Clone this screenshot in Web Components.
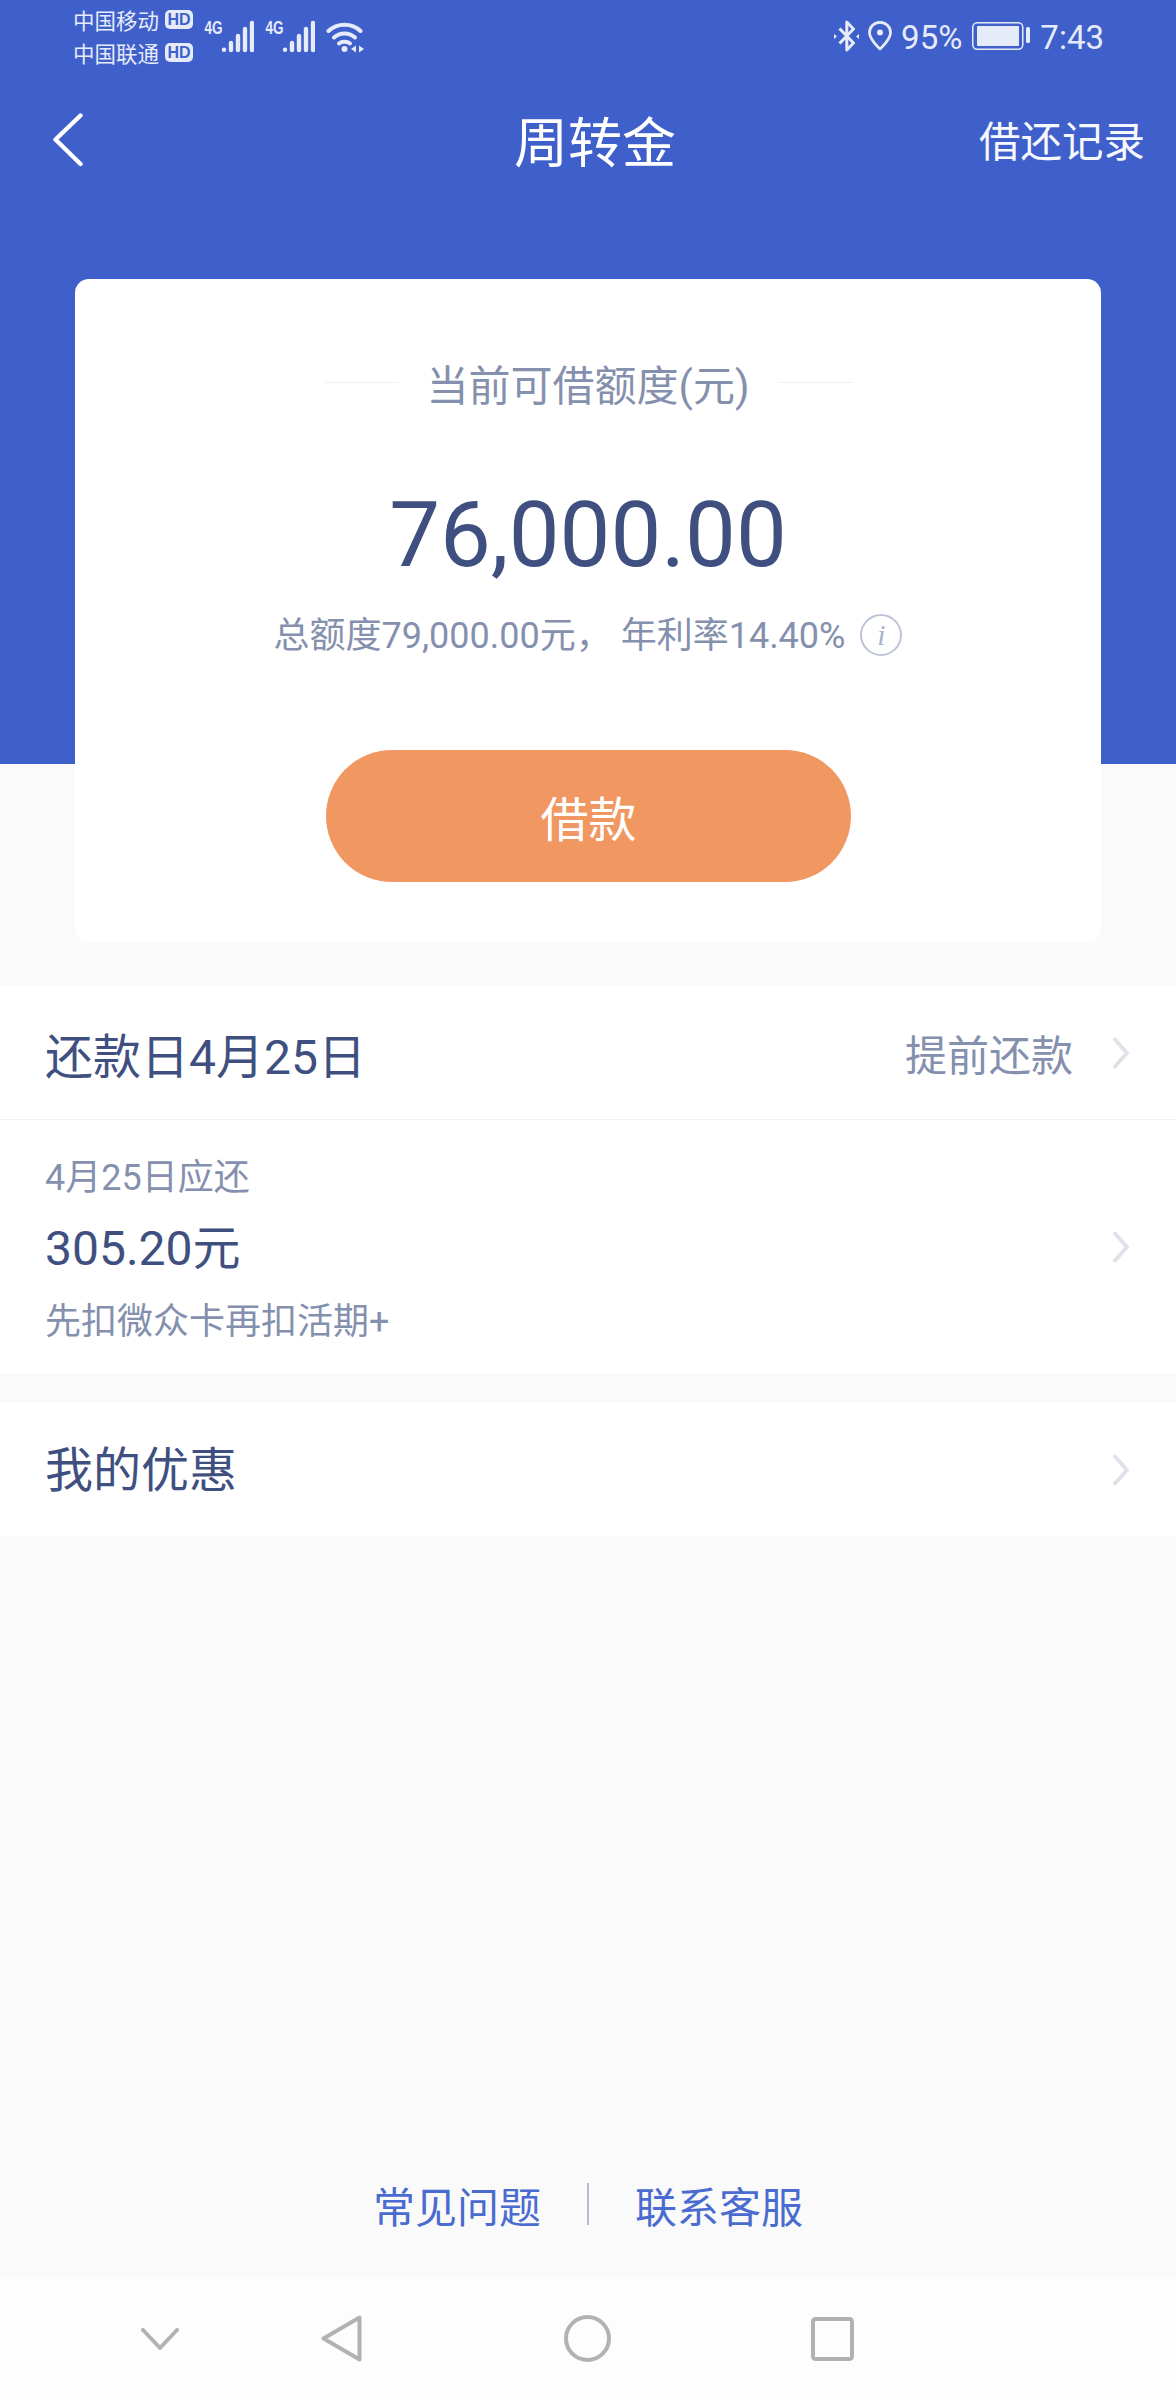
<!DOCTYPE html>
<html lang="zh-CN">
<head>
<meta charset="utf-8">
<title>周转金</title>
<style>
  html, body { margin: 0; padding: 0; }
  body { font-family: Roboto, "Noto Sans CJK SC", sans-serif; background: #fafafa; }
</style>
</head>
<body>
<loan-screen>
  <status-bar slot="top"></status-bar>
  <title-bar slot="top" heading="周转金" action="借还记录"></title-bar>
  <quota-card slot="top"></quota-card>

  <info-row slot="top" class="first">
    <span class="big">还款日4月25日</span>
    <span slot="aside">提前还款</span>
  </info-row>
  <bill-row slot="top"></bill-row>
  <info-row slot="top" class="last">
    <span>我的优惠</span>
  </info-row>

  <help-footer slot="bottom"></help-footer>
  <nav-keys slot="bottom"></nav-keys>
</loan-screen>

<script>
  // Small helper: every component gets an open shadow root from a markup string.
  const define = (name, markup, setup) => {
    customElements.define(name, class extends HTMLElement {
      constructor() {
        super();
        this.attachShadow({ mode: 'open' }).innerHTML = markup;
        if (setup) setup(this, this.shadowRoot);
      }
    });
  };

  const CHEVRON = `<svg width="18" height="32" viewBox="0 0 18 32" fill="none" stroke="#dfe2e9" stroke-width="4" stroke-linecap="round" stroke-linejoin="round"><path d="M3 2.5 L15 16 L3 29.5"/></svg>`;

  // Signal meter: network label plus a dot and four rising bars.
  const SIGNAL = `<svg width="50" height="36" viewBox="0 0 50 36" fill="#e6ebfa">
      <text x="0.5" y="15" font-family="Liberation Sans Narrow, Liberation Sans, sans-serif" font-weight="bold" font-size="18" textLength="18" lengthAdjust="spacingAndGlyphs">4G</text>
      <path d="M20 30.6 V30.8 M27 31 V24 M34 31 V17 M41 31 V10 M48 31 V4" stroke="#e6ebfa" stroke-width="4.4" stroke-linecap="round"/>
    </svg>`;

  // Page shell: blue band behind the header and the top of the card.
  define('loan-screen', `
    <style>
      :host { display: flex; flex-direction: column; justify-content: space-between;
              width: 1176px; height: 2400px; overflow: hidden;
              background: linear-gradient(#3f5fca 764px, #fafafa 764px); }
      .top, .bottom { display: flex; flex-direction: column; }
    </style>
    <div class="top"><slot name="top"></slot></div>
    <div class="bottom"><slot name="bottom"></slot></div>
  `);

  define('status-bar', `
    <style>
      :host { display: flex; align-items: flex-start; height: 72px; padding: 3px 72px 0 73px;
              box-sizing: border-box; color: #e6ebfa; }
      .carriers { display: flex; flex-direction: column; width: 120px; font-size: 21.5px; }
      .carrier { display: flex; align-items: center; justify-content: space-between; height: 33px; }
      .hd { width: 28px; height: 19px; border-radius: 5px; background: #e6ebfa; color: #3f5fca;
            font: bold 16px/19px "Liberation Sans", sans-serif; text-align: center; }
      .radios { display: flex; align-items: flex-start; margin: 16px 0 0 11px; gap: 11px; }
      .radios svg { display: block; }
      .system { display: flex; align-items: center; margin-left: auto; margin-top: 16px; height: 34px; }
      .system span { font-size: 33px; line-height: 34px; margin-top: 3px; }
      .bt { margin-right: 8px; }
      .pin { margin-right: 8px; }
      .pct { margin-right: 10px; }
      .bat { margin-right: 10px; }
    </style>
    <div class="carriers">
      <div class="carrier">中国移动<span class="hd">HD</span></div>
      <div class="carrier">中国联通<span class="hd">HD</span></div>
    </div>
    <div class="radios">
      ${SIGNAL}
      ${SIGNAL}
      <svg width="38" height="36" viewBox="0 0 38 36" fill="none" stroke="#e6ebfa" stroke-width="4" stroke-linecap="round">
        <path d="M2.5 12 C11 3.5 26 3.5 34.5 12"/>
        <path d="M8 18.5 C13.5 13 23.5 13 29 18.5"/>
        <path d="M13 24.5 C15.8 22 21.2 22 24 24.5"/>
        <circle cx="18.5" cy="30" r="3" fill="#e6ebfa" stroke="none"/>
        <path d="M30 26.5 V33.5 L25 30Z M33 26.5 V33.5 L38 30Z" fill="#e6ebfa" stroke="none"/>
      </svg>
    </div>
    <div class="system">
      <svg class="bt" width="25" height="32" viewBox="0 0 25 32" fill="none" stroke="#e6ebfa" stroke-width="3" stroke-linejoin="round">
        <path d="M5.5 8.5 L19.5 23 L12.8 30 V2 L19.5 9 L5.5 23.5"/>
        <path d="M0 14 L3 16.5 L0 19Z M25 14 L22 16.5 L25 19Z" fill="#e6ebfa" stroke="none"/>
      </svg>
      <svg class="pin" width="26" height="30" viewBox="0 0 26 30" fill="none" stroke="#e6ebfa" stroke-width="2.8">
        <path d="M13 28 C13 28 2.5 18.5 2.5 11.5 A10.5 10.2 0 0 1 23.5 11.5 C23.5 18.5 13 28 13 28Z" stroke-linejoin="round"/>
        <circle cx="13" cy="11.5" r="3" fill="#e6ebfa" stroke="none"/>
      </svg>
      <span class="pct">95%</span>
      <svg class="bat" width="58" height="28" viewBox="0 0 58 28" fill="#e6ebfa">
        <rect x="0.75" y="0.75" width="50" height="26.5" rx="4.5" fill="none" stroke="#e6ebfa" stroke-width="1.5"/>
        <rect x="5" y="4" width="42" height="20" rx="1"/>
        <rect x="54" y="5" width="4" height="16" rx="1.5"/>
      </svg>
      <span>7:43</span>
    </div>
  `);

  define('title-bar', `
    <style>
      :host { display: grid; grid-template-columns: 1fr auto 1fr; align-items: center;
              height: 136px; padding: 0 31px 0 53px; box-sizing: border-box; color: #fff; }
      svg { display: block; }
      .heading { font-size: 54px; margin-left: -8px; margin-top: -2px; }
      .action { font-size: 41.5px; justify-self: end; color: #f6f8fe; margin-top: -3px; }
    </style>
    <svg width="30" height="54" viewBox="0 0 30 54" fill="none" stroke="#fff" stroke-width="4.4" stroke-linecap="round" stroke-linejoin="round"><path d="M27.5 2.5 L2.5 26.5 L27.5 51"/></svg>
    <div class="heading"></div>
    <div class="action"></div>
  `, (el, root) => {
    root.querySelector('.heading').textContent = el.getAttribute('heading');
    root.querySelector('.action').textContent = el.getAttribute('action');
  });

  define('quota-card', `
    <style>
      :host { display: flex; flex-direction: column; align-items: center; box-sizing: border-box;
              width: 1026px; height: 663px; margin: 71px 0 0 75px; padding-top: 76px;
              border-radius: 14px; background: #fff; }
      .label { display: flex; align-items: center; height: 60px; font-size: 42px; color: #8490ad; }
      .label i { width: 75px; height: 1px; background: #eef0f3; margin-top: -6px; }
      .label span { margin: -5px 28px 0; }
      .amount { height: 110px; line-height: 110px; margin-top: 65px; font-size: 90.5px; color: #3f5080; }
      .terms { display: flex; align-items: center; height: 50px; margin-top: 17px; font-size: 36px; color: #8490ad; white-space: pre; }
      .info { width: 38px; height: 38px; margin: 6px 0 0 15px; border: 2px solid #bcc4d6; border-radius: 50%;
              color: #aab3c8; font: italic 30px/38px "Liberation Serif", serif; text-align: center; }
      .cta { display: flex; align-items: center; justify-content: center; width: 525px; height: 132px;
             margin-top: 93px; padding-left: 1px; box-sizing: border-box; border-radius: 66px;
             background: #f19762; color: #fff; font-size: 48px; }
    </style>
    <div class="label"><i></i><span>当前可借额度(元)</span><i></i></div>
    <div class="amount">76,000.00</div>
    <div class="terms">总额度79,000.00元， 年利率14.40%<span class="info">i</span></div>
    <div class="cta">借款</div>
  `);

  define('info-row', `
    <style>
      :host { display: flex; align-items: center; height: 133px; padding: 0 46px 0 45px; box-sizing: border-box;
              background: #fff; font-size: 48px; color: #3f5080; }
      :host(.first) { margin-top: 44px; border-bottom: 1px solid #f1f1f3; height: 134px; }
      :host(.last) { margin-top: 30px; }
      .main { flex: 1; }
      :host(.last) .main { padding-bottom: 7px; }
      .aside { font-size: 42px; color: #8490ad; margin-right: 39px; }
      svg { display: block; }
    </style>
    <div class="main"><slot></slot></div>
    <div class="aside"><slot name="aside"></slot></div>
    ${CHEVRON}
  `);

  define('bill-row', `
    <style>
      :host { display: flex; align-items: center; height: 253px; padding: 0 46px 0 45px; box-sizing: border-box; background: #fff; }
      .text { flex: 1; display: flex; flex-direction: column; padding-top: 7px; }
      .due, .note { height: 50px; line-height: 50px; font-size: 36px; color: #8490ad; }
      .sum { height: 60px; line-height: 60px; margin: 16px 0 18px; font-size: 48px; color: #3f5080; }
      svg { display: block; }
    </style>
    <div class="text">
      <div class="due">4月25日应还</div>
      <div class="sum">305.20元</div>
      <div class="note">先扣微众卡再扣活期+</div>
    </div>
    ${CHEVRON}
  `);

  define('help-footer', `
    <style>
      :host { display: flex; align-items: center; justify-content: center; height: 60px; padding: 0 0 43px 0;
              font-size: 42px; color: #4a6bcf; }
      i { width: 2px; height: 42px; margin: 0 46px; background: #b5bdd0; }
    </style>
    <span>常见问题</span><i></i><span>联系客服</span>
  `);

  define('nav-keys', `
    <style>
      :host { display: flex; align-items: center; height: 123px; padding-left: 141px; background: #fdfdfd; }
      svg { display: block; }
      .tri { margin-left: 142px; }
      .dot { margin-left: 202px; }
      .box { margin-left: 200px; }
    </style>
    <svg width="38" height="22" viewBox="0 0 38 22" fill="none" stroke="#b2b2b2" stroke-width="4" stroke-linecap="round" stroke-linejoin="round"><path d="M2 2 L19 20 L36 2"/></svg>
    <svg class="tri" width="41" height="47" viewBox="0 0 41 47" fill="none" stroke="#b2b2b2" stroke-width="4" stroke-linejoin="round"><path d="M38.5 2.5 V44.5 L2.5 23.5Z"/></svg>
    <svg class="dot" width="47" height="47" viewBox="0 0 47 47" fill="none" stroke="#b2b2b2" stroke-width="4"><circle cx="23.5" cy="23.5" r="21.5"/></svg>
    <svg class="box" width="43" height="44" viewBox="0 0 43 44" fill="none" stroke="#b2b2b2" stroke-width="4" stroke-linejoin="round"><rect x="2" y="2" width="39" height="40" rx="2.5"/></svg>
  `);
</script>
</body>
</html>
